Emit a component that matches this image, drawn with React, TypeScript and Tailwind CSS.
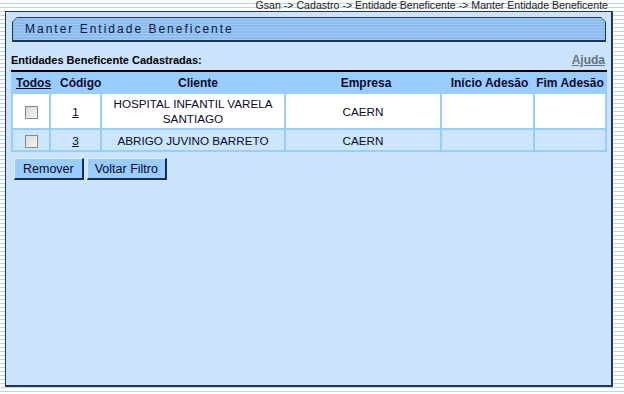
const rows = [
  { codigo: '1', cliente: ['HOSPITAL INFANTIL VARELA', 'SANTIAGO'], empresa: 'CAERN', inicio: '', fim: '' },
  { codigo: '3', cliente: ['ABRIGO JUVINO BARRETO'], empresa: 'CAERN', inicio: '', fim: '' },
];

function Checkbox() {
  return (
    <span className="inline-block h-[13px] w-[13px] border border-[#8a8a8a] bg-[linear-gradient(135deg,#d8d8d8,#f6f6f6)] align-middle" />
  );
}

function TitleBar({ title }: { title: string }) {
  return (
    <div className="ml-[1px] bg-[#22344f] p-[1px] pb-[2px] [clip-path:polygon(5px_0,calc(100%_-_5px)_0,100%_5px,100%_100%,0_100%,0_5px)]">
      <div className="flex h-[22px] items-center bg-[#8fc0ef] bg-[repeating-linear-gradient(to_bottom,#9ccaf4_0_1px,#8cbdee_1px_3px)] pl-[12px] [clip-path:polygon(4px_0,calc(100%_-_4px)_0,100%_4px,100%_100%,0_100%,0_4px)]">
        <span className="text-[12px] leading-[14px] tracking-[2px] text-[#10153f]">{title}</span>
      </div>
    </div>
  );
}

export default function App() {
  return (
    <div className="h-[394px] w-[624px] overflow-hidden bg-white bg-[repeating-linear-gradient(to_bottom,#ffffff_0_3px,#b6d8f0_3px_4px)] font-['Liberation_Sans',Arial,sans-serif]">
      <div className="flex h-[11px] justify-end pr-[16px] text-[10.6px] leading-[11px] text-[#222]">
        Gsan -&gt; Cadastro -&gt; Entidade Beneficente -&gt; Manter Entidade Beneficente
      </div>
      <div className="ml-[5px] h-[376px] w-[608px] border border-r-2 border-b-2 border-[#23354f] bg-[#cbe4fc] px-[5px] pt-[5px]">
        <TitleBar title="Manter Entidade Beneficente" />

        <div className="mt-[11px] flex items-end justify-between pr-[1px]">
          <span className="text-[11px] font-bold leading-[14px] text-black">
            Entidades Beneficente Cadastradas:
          </span>
          <span className="text-[12px] font-bold leading-[14px] text-[#66727d] underline">Ajuda</span>
        </div>

        <table className="mt-[3px] w-[596px] table-fixed border-separate border-spacing-[2px] border-t-2 border-black bg-[#99ccff] text-[#0a0a2a]">
          <colgroup>
            <col className="w-[36px]" />
            <col className="w-[49px]" />
            <col className="w-[182px]" />
            <col className="w-[154px]" />
            <col className="w-[91px]" />
            <col className="w-[70px]" />
          </colgroup>
          <thead>
            <tr className="h-[18px] text-[12px] font-bold leading-[14px]">
              <th className="whitespace-nowrap pl-[3px] text-left">
                <span className="underline">Todos</span>
              </th>
              <th className="whitespace-nowrap pl-[9px] text-center">Código</th>
              <th className="pl-[10px] text-center">Cliente</th>
              <th className="pl-[6px] text-center">Empresa</th>
              <th className="whitespace-nowrap pl-[4px] text-center">Início Adesão</th>
              <th className="whitespace-nowrap text-center">Fim Adesão</th>
            </tr>
          </thead>
          <tbody className="text-[11.7px] leading-[15px]">
            {rows.map((r, i) => (
              <tr key={r.codigo} className={i === 0 ? 'h-[34px] bg-white' : 'h-[20px] bg-[#cbe5fd]'}>
                <td className="text-center align-middle">
                  <Checkbox />
                </td>
                <td className="text-center align-middle">
                  <span className="underline">{r.codigo}</span>
                </td>
                <td className="text-center align-middle">
                  {r.cliente.map((line) => (
                    <div key={line}>{line}</div>
                  ))}
                </td>
                <td className="text-center align-middle">{r.empresa}</td>
                <td className="text-center align-middle">{r.inicio}</td>
                <td className="text-center align-middle">{r.fim}</td>
              </tr>
            ))}
          </tbody>
        </table>

        <div className="mt-[6px] flex gap-[3px] pl-[3px]">
          <button className="h-[22px] border-t border-l border-r-2 border-b-2 border-t-[#dcefff] border-l-[#dcefff] border-r-[#1c2c4c] border-b-[#1c2c4c] bg-[#99ccff] px-[8px] text-[12.5px] leading-[14px] text-[#0a0a2a]">
            Remover
          </button>
          <button className="h-[22px] border-t border-l border-r-2 border-b-2 border-t-[#dcefff] border-l-[#dcefff] border-r-[#1c2c4c] border-b-[#1c2c4c] bg-[#99ccff] px-[7px] text-[12.5px] leading-[14px] text-[#0a0a2a]">
            Voltar Filtro
          </button>
        </div>
      </div>
    </div>
  );
}
